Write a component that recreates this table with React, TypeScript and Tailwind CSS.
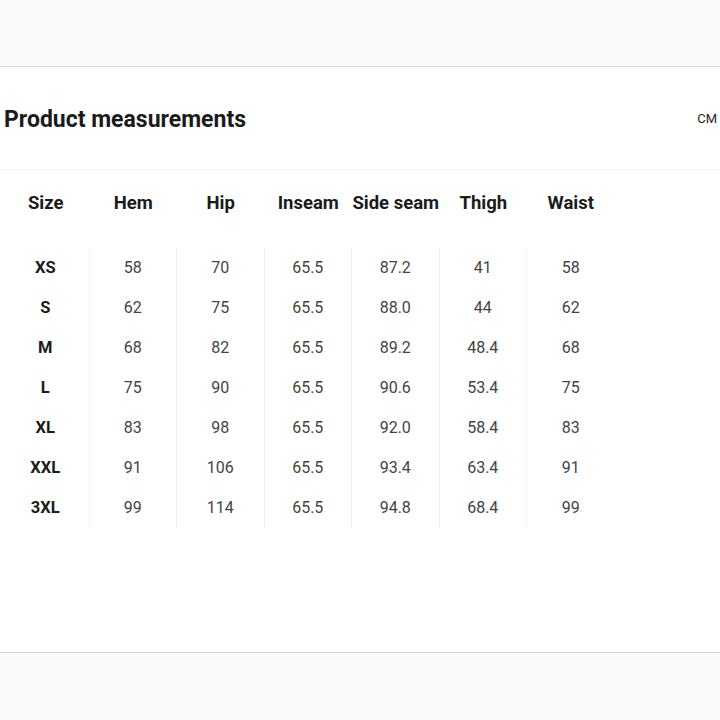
const headers = ['Size', 'Hem', 'Hip', 'Inseam', 'Side seam', 'Thigh', 'Waist'];

const rows = [
  ['XS', '58', '70', '65.5', '87.2', '41', '58'],
  ['S', '62', '75', '65.5', '88.0', '44', '62'],
  ['M', '68', '82', '65.5', '89.2', '48.4', '68'],
  ['L', '75', '90', '65.5', '90.6', '53.4', '75'],
  ['XL', '83', '98', '65.5', '92.0', '58.4', '83'],
  ['XXL', '91', '106', '65.5', '93.4', '63.4', '91'],
  ['3XL', '99', '114', '65.5', '94.8', '68.4', '99'],
];

export default function App() {
  return (
    <div className="w-[720px] h-[720px] flex flex-col bg-white text-[#1b1b1b] font-['Roboto',sans-serif]">
      <div className="h-[67px] bg-[#f9f9f9] border-b border-[#dcdcdc]" />

      <div className="flex-1 flex flex-col">
        <div className="h-[103px] flex items-center justify-between pl-[4px] pr-[3px] border-b border-[#f3f3f3]">
          <h1 className="text-[23px] font-bold mt-[4px]">Product measurements</h1>
          <span className="text-[13px] text-[#222] mt-[1px]">CM</span>
        </div>

        <div className="pl-[2px] pt-[20px]">
          <div className="flex h-[28px] items-center">
            {headers.map(h => (
              <div key={h} className="w-[87.5px] text-center text-[18.5px] font-bold whitespace-nowrap">
                {h}
              </div>
            ))}
          </div>

          {/* columns with faint dividers between them */}
          <div className="flex mt-[30px]">
            {headers.map((h, c) => (
              <div
                key={h}
                className={`w-[87.5px] flex flex-col ${c < headers.length - 1 ? 'border-r border-[#f2f2f2]' : ''}`}
              >
                {rows.map(r => (
                  <div
                    key={r[0]}
                    className={`h-[40px] flex items-center justify-center ${
                      c === 0 ? 'text-[16.5px] font-bold' : 'text-[16px] text-[#444]'
                    }`}
                  >
                    {r[c]}
                  </div>
                ))}
              </div>
            ))}
          </div>
        </div>
      </div>

      <div className="h-[68px] bg-[#f9f9f9] border-t border-[#d4d4d4]" />
    </div>
  );
}
